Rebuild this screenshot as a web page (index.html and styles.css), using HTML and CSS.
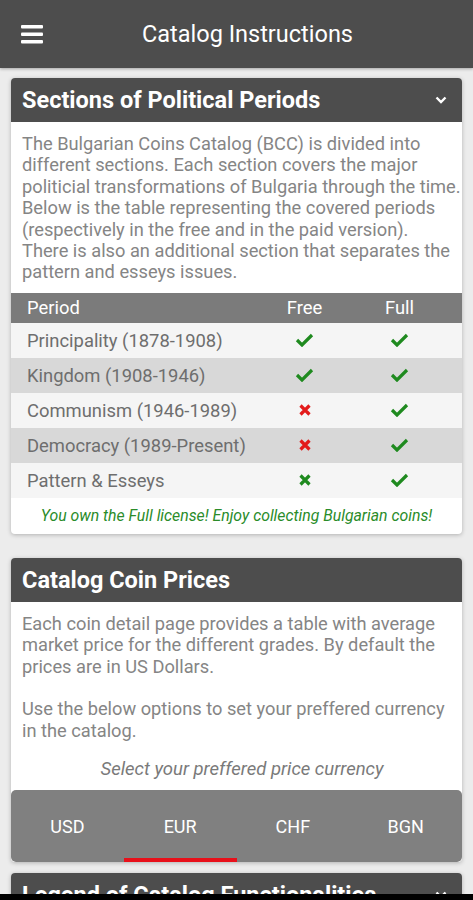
FILE: index.html
```html
<!DOCTYPE html>
<html>
<head>
    <meta charset="UTF-8">
    <link rel="stylesheet" href="styles.css">
</head>
<body>
    <div class="topbar">
        <svg class="menu-icon" width="22" height="20" viewBox="0 0 22 20">
            <rect x="0" y="1" width="22" height="3.5" rx="1" fill="#fff"/>
            <rect x="0" y="8.5" width="22" height="3.5" rx="1" fill="#fff"/>
            <rect x="0" y="16" width="22" height="3.5" rx="1" fill="#fff"/>
        </svg>
        <div class="topbar-title">Catalog Instructions</div>
    </div>

    <div class="content">
        <div class="card">
            <div class="card-head">
                <div class="card-title">Sections of Political Periods</div>
                <svg class="chevron" width="12" height="8" viewBox="0 0 12 8">
                    <path d="M1.5 1.5 L6 6 L10.5 1.5" stroke="#fff" stroke-width="2.4" fill="none"/>
                </svg>
            </div>
            <div class="card-text card-text-wide">
                The Bulgarian Coins Catalog (BCC) is divided into different sections. Each section covers the major<br>
                politicial transformations of Bulgaria through the time.<br>
                Below is the table representing the covered periods (respectively in the free and in the paid version).<br>
                There is also an additional section that separates the pattern and esseys issues.
            </div>
            <table class="periods">
                <tr class="periods-head">
                    <th class="col-period">Period</th>
                    <th>Free</th>
                    <th class="col-full">Full</th>
                </tr>
                <tr>
                    <td class="col-period">Principality (1878-1908)</td>
                    <td><svg class="mark" width="19" height="14" viewBox="0 0 19 14"><path d="M2 7 L7 12 L17 2" stroke="#1f8a1f" stroke-width="3.2" fill="none"/></svg></td>
                    <td class="col-full"><svg class="mark" width="19" height="14" viewBox="0 0 19 14"><path d="M2 7 L7 12 L17 2" stroke="#1f8a1f" stroke-width="3.2" fill="none"/></svg></td>
                </tr>
                <tr class="alt">
                    <td class="col-period">Kingdom (1908-1946)</td>
                    <td><svg class="mark" width="19" height="14" viewBox="0 0 19 14"><path d="M2 7 L7 12 L17 2" stroke="#1f8a1f" stroke-width="3.2" fill="none"/></svg></td>
                    <td class="col-full"><svg class="mark" width="19" height="14" viewBox="0 0 19 14"><path d="M2 7 L7 12 L17 2" stroke="#1f8a1f" stroke-width="3.2" fill="none"/></svg></td>
                </tr>
                <tr>
                    <td class="col-period">Communism (1946-1989)</td>
                    <td><svg class="mark" width="14" height="14" viewBox="0 0 14 14"><path d="M2.5 2.5 L11.5 11.5 M11.5 2.5 L2.5 11.5" stroke="#e31b1b" stroke-width="3.2" fill="none"/></svg></td>
                    <td class="col-full"><svg class="mark" width="19" height="14" viewBox="0 0 19 14"><path d="M2 7 L7 12 L17 2" stroke="#1f8a1f" stroke-width="3.2" fill="none"/></svg></td>
                </tr>
                <tr class="alt">
                    <td class="col-period">Democracy (1989-Present)</td>
                    <td><svg class="mark" width="14" height="14" viewBox="0 0 14 14"><path d="M2.5 2.5 L11.5 11.5 M11.5 2.5 L2.5 11.5" stroke="#e31b1b" stroke-width="3.2" fill="none"/></svg></td>
                    <td class="col-full"><svg class="mark" width="19" height="14" viewBox="0 0 19 14"><path d="M2 7 L7 12 L17 2" stroke="#1f8a1f" stroke-width="3.2" fill="none"/></svg></td>
                </tr>
                <tr>
                    <td class="col-period">Pattern &amp; Esseys</td>
                    <td><svg class="mark" width="14" height="14" viewBox="0 0 14 14"><path d="M2.5 2.5 L11.5 11.5 M11.5 2.5 L2.5 11.5" stroke="#1f8a1f" stroke-width="3.2" fill="none"/></svg></td>
                    <td class="col-full"><svg class="mark" width="19" height="14" viewBox="0 0 19 14"><path d="M2 7 L7 12 L17 2" stroke="#1f8a1f" stroke-width="3.2" fill="none"/></svg></td>
                </tr>
            </table>
            <div class="license">You own the Full license! Enjoy collecting Bulgarian coins!</div>
        </div>

        <div class="card card-prices">
            <div class="card-head">
                <div class="card-title">Catalog Coin Prices</div>
            </div>
            <div class="card-text">
                Each coin detail page provides a table with average market price for the different grades. By default the prices are in US Dollars.
                <br><br>
                Use the below options to set your preffered currency in the catalog.
            </div>
            <div class="currency-hint">Select your preffered price currency</div>
            <div class="tabs">
                <div class="tab">USD</div>
                <div class="tab active">EUR</div>
                <div class="tab">CHF</div>
                <div class="tab">BGN</div>
            </div>
        </div>

        <div class="card">
            <div class="card-head">
                <div class="card-title">Legend of Catalog Functionalities</div>
                <svg class="chevron" width="12" height="8" viewBox="0 0 12 8">
                    <path d="M1.5 1.5 L6 6 L10.5 1.5" stroke="#fff" stroke-width="2.4" fill="none"/>
                </svg>
            </div>
        </div>
    </div>

    <div class="navbar"></div>
</body>
</html>
```

FILE: styles.css
```css
body {
    background-color: #ececec;
    font-family: Roboto, "Liberation Sans", sans-serif;
    margin: 0;
    padding: 0;
}
div.topbar {
    align-items: center;
    background-color: #4d4d4d;
    box-shadow: 0 1px 3px rgba(0, 0, 0, 0.3);
    display: flex;
    height: 68px;
    padding: 0 21px;
}
svg.menu-icon {
    flex: none;
}
div.topbar-title {
    color: white;
    flex: 1;
    font-size: 23.5px;
    text-align: center;
}
div.content {
    padding: 10px 11px 0;
}
div.card {
    background-color: white;
    border-radius: 4px;
    box-shadow: 0 1px 4px rgba(0, 0, 0, 0.25);
    margin-bottom: 24px;
    overflow: hidden;
}
div.card-head {
    align-items: center;
    background-color: #4d4d4d;
    display: flex;
    height: 44px;
    justify-content: space-between;
    padding: 0 11px;
}
div.card-title {
    color: white;
    font-size: 23.5px;
    font-weight: bold;
    white-space: nowrap;
}
svg.chevron {
    flex: none;
    margin-right: 4px;
}
div.card-text {
    color: #858585;
    font-size: 18.25px;
    line-height: 21.4px;
    padding: 11px 11px 0;
}
div.card-text-wide {
    padding-right: 0;
}
table.periods {
    border-collapse: collapse;
    font-size: 18.4px;
    margin-top: 10px;
    width: 100%;
}
table.periods th,
table.periods td {
    padding: 0;
    text-align: center;
    width: 95px;
}
table.periods th.col-period,
table.periods td.col-period {
    padding-left: 16px;
    text-align: left;
    width: auto;
}
table.periods th.col-full,
table.periods td.col-full {
    padding-right: 15px;
}
tr.periods-head {
    background-color: #7b7b7b;
    color: white;
    height: 30px;
}
tr.periods-head th {
    font-weight: normal;
}
table.periods td {
    background-color: #f5f5f5;
    color: #6e6e6e;
    height: 35px;
}
table.periods tr.alt td {
    background-color: #d8d8d8;
}
svg.mark {
    display: block;
    margin: 0 auto;
}
div.license {
    color: #2a8c2a;
    font-size: 15.8px;
    font-style: italic;
    padding: 8px 0 9px;
    text-align: center;
}
div.card-prices {
    margin-bottom: 11px;
}
div.currency-hint {
    color: #7a7a7a;
    font-size: 18.5px;
    font-style: italic;
    padding: 17px 0 10px 11px;
    text-align: center;
}
div.tabs {
    background-color: #808080;
    border-radius: 5px;
    display: flex;
    height: 72px;
}
div.tab {
    align-items: center;
    box-sizing: border-box;
    color: white;
    display: flex;
    flex: 1;
    font-size: 18px;
    justify-content: center;
}
div.tab.active {
    border-bottom: 4px solid #e8101a;
    padding-top: 4px;
}
div.navbar {
    background-color: black;
    bottom: 0;
    height: 6px;
    left: 0;
    position: fixed;
    right: 0;
}
```
